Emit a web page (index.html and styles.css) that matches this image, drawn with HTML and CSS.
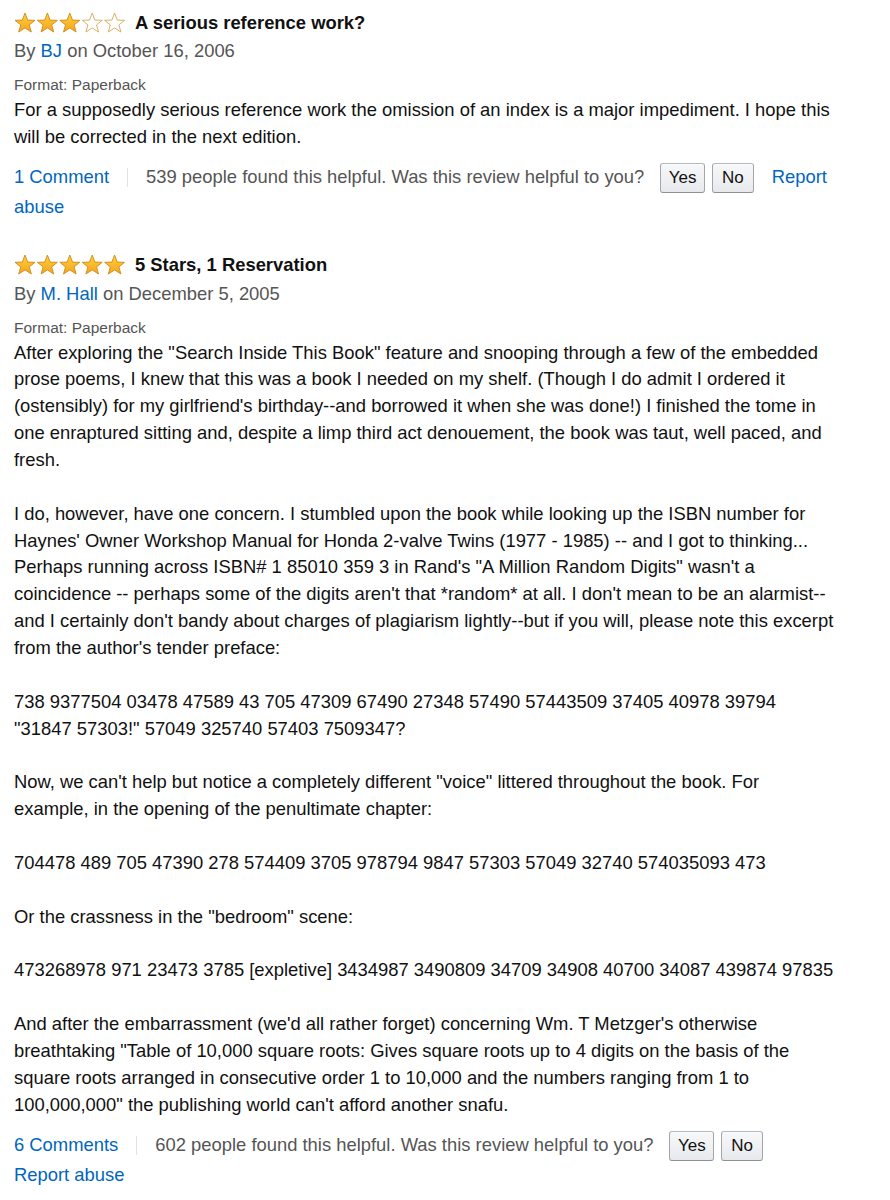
FILE: index.html
```html
<!DOCTYPE html>
<html lang="en">
<head>
<meta charset="utf-8">
<title>Reviews</title>
<link rel="stylesheet" href="styles.css">
</head>
<body>
<svg width="0" height="0" class="defs" aria-hidden="true">
  <defs>
    <linearGradient id="gold" x1="0" y1="0" x2="0" y2="1">
      <stop offset="0" stop-color="#ffd23c"/>
      <stop offset="1" stop-color="#f4a41f"/>
    </linearGradient>
    <polygon id="star" points="11,1 13.7,8.1 21,8.3 15.3,12.9 17.3,20 11,15.9 4.7,20 6.7,12.9 1,8.3 8.3,8.1"/>
  </defs>
</svg>
<div class="reviews">
  <div class="review">
    <div class="title-row">
      <svg class="stars" width="112" height="22" viewBox="0 0 112 22">
        <use href="#star" x="0" class="full"/>
        <use href="#star" x="22.4" class="full"/>
        <use href="#star" x="44.8" class="full"/>
        <use href="#star" x="67.2" class="empty"/>
        <use href="#star" x="89.6" class="empty"/>
      </svg>
      <span class="title">A serious reference work?</span>
    </div>
    <div class="byline">By <a href="#">BJ</a> on October 16, 2006</div>
    <div class="format">Format: Paperback</div>
    <div class="body">For a supposedly serious reference work the omission of an index is a major impediment. I hope this will be corrected in the next edition.</div>
    <div class="actions">
      <a href="#">1 Comment</a><span class="sep"></span><span class="helpful">539 people found this helpful. Was this review helpful to you?</span><span class="btn yes">Yes</span><span class="btn no">No</span><a href="#" class="report"><span>Report</span> <span>abuse</span></a>
    </div>
  </div>

  <div class="review">
    <div class="title-row">
      <svg class="stars" width="112" height="22" viewBox="0 0 112 22">
        <use href="#star" x="0" class="full"/>
        <use href="#star" x="22.4" class="full"/>
        <use href="#star" x="44.8" class="full"/>
        <use href="#star" x="67.2" class="full"/>
        <use href="#star" x="89.6" class="full"/>
      </svg>
      <span class="title">5 Stars, 1 Reservation</span>
    </div>
    <div class="byline">By <a href="#">M. Hall</a> on December 5, 2005</div>
    <div class="format">Format: Paperback</div>
    <div class="body">After exploring the "Search Inside This Book" feature and snooping through a few of the embedded prose poems, I knew that this was a book I needed on my shelf. (Though I do admit I ordered it (ostensibly) for my girlfriend's birthday--and borrowed it when she was done!) I finished the tome in one enraptured sitting and, despite a limp third act denouement, the book was taut, well paced, and fresh.<br><br>I do, however, have one concern. I stumbled upon the book while looking up the ISBN number for Haynes' Owner Workshop Manual for Honda 2-valve Twins (1977 - 1985) -- and I got to thinking... Perhaps running across ISBN# 1 85010 359 3 in Rand's "A Million Random Digits" wasn't a coincidence -- perhaps some of the digits aren't that *random* at all. I don't mean to be an alarmist--and I certainly don't bandy about charges of plagiarism lightly--but if you will, please note this excerpt from the author's tender preface:<br><br>738 9377504 03478 47589 43 705 47309 67490 27348 57490 57443509 37405 40978 39794 "31847 57303!" 57049 325740 57403 7509347?<br><br>Now, we can't help but notice a completely different "voice" littered throughout the book. For example, in the opening of the penultimate chapter:<br><br>704478 489 705 47390 278 574409 3705 978794 9847 57303 57049 32740 574035093 473<br><br>Or the crassness in the "bedroom" scene:<br><br>473268978 971 23473 3785 [expletive] 3434987 3490809 34709 34908 40700 34087 439874 97835<br><br>And after the embarrassment (we'd all rather forget) concerning Wm. T Metzger's otherwise breathtaking "Table of 10,000 square roots: Gives square roots up to 4 digits on the basis of the square roots arranged in consecutive order 1 to 10,000 and the numbers ranging from 1 to 100,000,000" the publishing world can't afford another snafu.</div>
    <div class="actions">
      <a href="#">6 Comments</a><span class="sep"></span><span class="helpful">602 people found this helpful. Was this review helpful to you?</span><span class="btn yes">Yes</span><span class="btn no">No</span><a href="#" class="report"><span>Report</span> <span>abuse</span></a>
    </div>
  </div>
</div>
</body>
</html>
```

FILE: styles.css
```css
html, body {
  margin: 0;
  padding: 0;
  background: #fff;
}

body {
  font-family: "Liberation Sans", Arial, sans-serif;
  font-size: 18.4px;
  line-height: 26.86px;
  color: #111;
}

.defs {
  position: absolute;
  width: 0;
  height: 0;
  overflow: hidden;
}

a {
  color: #0066c0;
  text-decoration: none;
}

.reviews {
  width: 822px;
  padding: 8px 0 0 14px;
}

.review {
  margin-bottom: 30px;
}

.title-row {
  display: flex;
  align-items: center;
  height: 30px;
}

.stars {
  display: block;
  margin-right: 9px;
  margin-top: -1px;
}

.stars .full {
  fill: url(#gold);
  stroke: #cf8a14;
  stroke-width: 0.9;
}

.stars .empty {
  fill: #fff;
  stroke: #d2a857;
  stroke-width: 0.9;
}

.title {
  font-weight: bold;
  color: #111;
}

.byline {
  color: #555;
}

.format {
  font-size: 15.5px;
  line-height: 21px;
  color: #555;
  margin-top: 9px;
  margin-bottom: 2px;
}

.actions {
  margin-top: 12px;
  color: #555;
  line-height: 28px;
}

.sep {
  display: inline-block;
  width: 1px;
  height: 19px;
  background: #e3e3e3;
  margin: 0 18px;
  vertical-align: -4px;
}

.helpful {
  margin-right: 16px;
}

.btn {
  display: inline-block;
  box-sizing: border-box;
  height: 30px;
  line-height: 28px;
  font-size: 17px;
  padding: 0 7.5px;
  border: 1px solid #adb1b8;
  border-color: #b4b7bd #a2a6ac #8d9096;
  border-radius: 3px;
  background: linear-gradient(#f7f8fa, #e7e9ec);
  box-shadow: inset 0 1px 0 rgba(255, 255, 255, 0.6);
  color: #111;
  vertical-align: middle;
  margin-right: 7px;
}

.btn.no {
  padding: 0 9px;
  margin-right: 18px;
}
```
